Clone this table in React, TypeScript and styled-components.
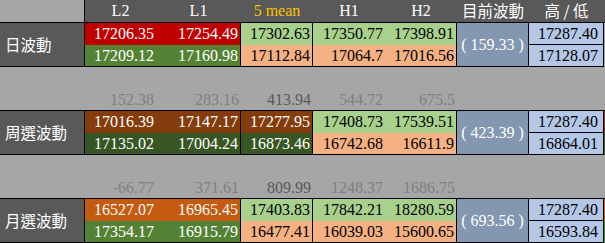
import React from "react"
import styled, { createGlobalStyle } from "styled-components"

const GlobalStyle = createGlobalStyle`
  body {
    margin: 0;
    overflow: hidden;
    background: #a6a6a6;
  }
`

const RED = "#c00000"
const GREEN = "#548235"
const DKGREEN = "#375623"
const BROWN = "#843c0c"
const ORANGE = "#c55a11"
const LGREEN = "#a9d18e"
const SALMON = "#f4b183"
const GRAY = "#a6a6a6"
const DARK = "#595959"

const Sheet = styled.div`
  display: grid;
  grid-template-columns: 85px 71px 85px 72px 72px 72px 72px 75px 24px;
  grid-template-rows: 23px;
  grid-auto-rows: 22px;
  width: 628px;
  font-family: "Liberation Serif", "Noto Serif CJK TC", serif;
  font-size: 16px;
  line-height: 1;
`

const Corner = styled.div`
  box-sizing: border-box;
  background: ${GRAY};
  border-right: 1px solid #000;
  border-bottom: 1px solid #000;
`

const HeadCell = styled.div<{ $accent?: boolean; $cjk?: boolean }>`
  box-sizing: border-box;
  background: ${DARK};
  border-bottom: 1px solid #000;
  color: ${p => (p.$accent ? "#ffc000" : "#fff")};
  display: flex;
  align-items: center;
  justify-content: center;
  font-family: ${p =>
    p.$cjk ? `"Noto Sans CJK TC", sans-serif` : `"Liberation Serif", serif`};
  font-size: ${p => (p.$cjk ? "15.5px" : "16px")};
`

const Label = styled.div`
  box-sizing: border-box;
  grid-row: span 2;
  background: ${DARK};
  border-right: 1px solid #000;
  border-bottom: 1px solid #000;
  color: #fff;
  display: flex;
  align-items: center;
  padding-left: 5px;
  font-family: "Noto Sans CJK TC", sans-serif;
  font-size: 15.5px;
`

const Value = styled.div<{ $bg: string; $right?: boolean; $bottom?: boolean }>`
  box-sizing: border-box;
  background: ${p => p.$bg};
  color: ${p => ([LGREEN, SALMON].includes(p.$bg) ? "#000" : "#fff")};
  border-right: ${p => (p.$right ? "1px solid #000" : "none")};
  border-bottom: ${p => (p.$bottom ? "1px solid #000" : "none")};
  display: flex;
  align-items: center;
  justify-content: flex-end;
  padding-right: 2px;
`

const Spread = styled.div`
  box-sizing: border-box;
  grid-row: span 2;
  background: #8497b0;
  border-right: 1px solid #000;
  border-bottom: 1px solid #000;
  color: #fff;
  display: flex;
  align-items: center;
  justify-content: center;
  white-space: pre;
`

const HighLow = styled.div`
  box-sizing: border-box;
  background: #b4c7e7;
  border-right: 1px solid #000;
  border-bottom: 1px solid #000;
  color: #000;
  display: flex;
  align-items: center;
  justify-content: flex-end;
  padding-right: 5px;
`

const Filler = styled.div<{ $bg: string }>`
  background: ${p => p.$bg};
`

const GapRow = styled.div`
  grid-column: 1 / -1;
  background: ${GRAY};
`

const Diff = styled.div<{ $strong?: boolean }>`
  box-sizing: border-box;
  background: ${GRAY};
  border-bottom: 1px solid #000;
  color: ${p => (p.$strong ? "#595959" : "#808080")};
  display: flex;
  align-items: center;
  justify-content: flex-end;
  padding-right: 2px;
`

type Band = {
  label: string
  diffs?: string[]
  top: string[]
  bottom: string[]
  topBg: string[]
  bottomBg: string[]
  edge: [string, string]
  spread: string
  high: string
  low: string
}

const bands: Band[] = [
  {
    label: "日波動",
    top: ["17206.35", "17254.49", "17302.63", "17350.77", "17398.91"],
    bottom: ["17209.12", "17160.98", "17112.84", "17064.7", "17016.56"],
    topBg: [RED, RED, LGREEN, LGREEN, LGREEN],
    bottomBg: [GREEN, GREEN, SALMON, SALMON, SALMON],
    edge: [GRAY, GRAY],
    spread: "( 159.33 )",
    high: "17287.40",
    low: "17128.07",
  },
  {
    label: "周選波動",
    diffs: ["152.38", "283.16", "413.94", "544.72", "675.5"],
    top: ["17016.39", "17147.17", "17277.95", "17408.73", "17539.51"],
    bottom: ["17135.02", "17004.24", "16873.46", "16742.68", "16611.9"],
    topBg: [BROWN, BROWN, BROWN, LGREEN, LGREEN],
    bottomBg: [DKGREEN, DKGREEN, DKGREEN, SALMON, SALMON],
    edge: [BROWN, DKGREEN],
    spread: "( 423.39 )",
    high: "17287.40",
    low: "16864.01",
  },
  {
    label: "月選波動",
    diffs: ["-66.77", "371.61", "809.99", "1248.37", "1686.75"],
    top: ["16527.07", "16965.45", "17403.83", "17842.21", "18280.59"],
    bottom: ["17354.17", "16915.79", "16477.41", "16039.03", "15600.65"],
    topBg: [ORANGE, ORANGE, LGREEN, LGREEN, LGREEN],
    bottomBg: [GREEN, GREEN, SALMON, SALMON, SALMON],
    edge: [ORANGE, GREEN],
    spread: "( 693.56 )",
    high: "17287.40",
    low: "16593.84",
  },
]

// columns that close a group get a right border
const groupEnd = [false, true, true, false, true]

function BandRows({ band }: { band: Band }) {
  return (
    <>
      {band.diffs && (
        <>
          <GapRow />
          <Diff />
          {band.diffs.map((d, i) => (
            <Diff key={i} $strong={i === 2}>
              {d}
            </Diff>
          ))}
          <Diff />
          <Diff />
          <Diff />
        </>
      )}
      <Label>{band.label}</Label>
      {band.top.map((v, i) => (
        <Value key={i} $bg={band.topBg[i]} $right={groupEnd[i]}>
          {v}
        </Value>
      ))}
      <Spread>{band.spread}</Spread>
      <HighLow>{band.high}</HighLow>
      <Filler $bg={band.edge[0]} />
      {band.bottom.map((v, i) => (
        <Value key={i} $bg={band.bottomBg[i]} $right={groupEnd[i]} $bottom>
          {v}
        </Value>
      ))}
      <HighLow>{band.low}</HighLow>
      <Filler $bg={band.edge[1]} />
    </>
  )
}

export default function App() {
  return (
    <>
      <GlobalStyle />
      <Sheet>
        <Corner />
        <HeadCell>L2</HeadCell>
        <HeadCell>L1</HeadCell>
        <HeadCell $accent>5 mean</HeadCell>
        <HeadCell>H1</HeadCell>
        <HeadCell>H2</HeadCell>
        <HeadCell $cjk>目前波動</HeadCell>
        <HeadCell $cjk>高 / 低</HeadCell>
        <HeadCell />
        {bands.map(b => (
          <BandRows key={b.label} band={b} />
        ))}
      </Sheet>
    </>
  )
}
